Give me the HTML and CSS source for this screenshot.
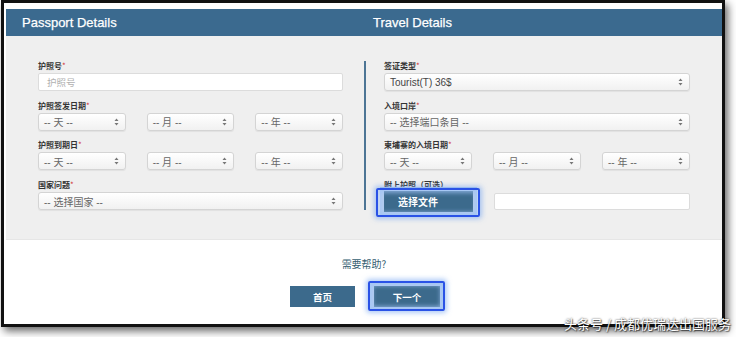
FILE: index.html
```html
<!DOCTYPE html>
<html lang="zh">
<head>
<meta charset="utf-8">
<title>Visa Form</title>
<link rel="stylesheet" href="styles.css">
</head>
<body>
<div class="frame">
  <div class="header">
    <div class="h-col h-left">Passport Details</div>
    <div class="h-col">Travel Details</div>
  </div>
  <div class="section">
    <div class="cols">
      <div class="col">
        <div class="field">
          <div class="label">护照号<span class="req">*</span></div>
          <div class="input"><span class="ph">护照号</span></div>
        </div>
        <div class="field">
          <div class="label">护照签发日期<span class="req">*</span></div>
          <div class="row3">
            <div class="select"><span>-- 天 --</span><svg class="arr" width="5" height="8" viewBox="0 0 5 8"><path d="M2.5 0.5 L4.5 3 H0.5 Z M2.5 7.5 L4.5 5 H0.5 Z" fill="#777"/></svg></div>
            <div class="select"><span>-- 月 --</span><svg class="arr" width="5" height="8" viewBox="0 0 5 8"><path d="M2.5 0.5 L4.5 3 H0.5 Z M2.5 7.5 L4.5 5 H0.5 Z" fill="#777"/></svg></div>
            <div class="select"><span>-- 年 --</span><svg class="arr" width="5" height="8" viewBox="0 0 5 8"><path d="M2.5 0.5 L4.5 3 H0.5 Z M2.5 7.5 L4.5 5 H0.5 Z" fill="#777"/></svg></div>
          </div>
        </div>
        <div class="field">
          <div class="label">护照到期日<span class="req">*</span></div>
          <div class="row3">
            <div class="select"><span>-- 天 --</span><svg class="arr" width="5" height="8" viewBox="0 0 5 8"><path d="M2.5 0.5 L4.5 3 H0.5 Z M2.5 7.5 L4.5 5 H0.5 Z" fill="#777"/></svg></div>
            <div class="select"><span>-- 月 --</span><svg class="arr" width="5" height="8" viewBox="0 0 5 8"><path d="M2.5 0.5 L4.5 3 H0.5 Z M2.5 7.5 L4.5 5 H0.5 Z" fill="#777"/></svg></div>
            <div class="select"><span>-- 年 --</span><svg class="arr" width="5" height="8" viewBox="0 0 5 8"><path d="M2.5 0.5 L4.5 3 H0.5 Z M2.5 7.5 L4.5 5 H0.5 Z" fill="#777"/></svg></div>
          </div>
        </div>
        <div class="field">
          <div class="label">国家问题<span class="req">*</span></div>
          <div class="select"><span>-- 选择国家 --</span><svg class="arr" width="5" height="8" viewBox="0 0 5 8"><path d="M2.5 0.5 L4.5 3 H0.5 Z M2.5 7.5 L4.5 5 H0.5 Z" fill="#777"/></svg></div>
        </div>
      </div>
      <div class="divider"></div>
      <div class="col">
        <div class="field">
          <div class="label">签证类型<span class="req">*</span></div>
          <div class="select"><span class="dark">Tourist(T) 36$</span><svg class="arr" width="5" height="8" viewBox="0 0 5 8"><path d="M2.5 0.5 L4.5 3 H0.5 Z M2.5 7.5 L4.5 5 H0.5 Z" fill="#777"/></svg></div>
        </div>
        <div class="field">
          <div class="label">入境口岸<span class="req">*</span></div>
          <div class="select"><span>-- 选择端口条目 --</span><svg class="arr" width="5" height="8" viewBox="0 0 5 8"><path d="M2.5 0.5 L4.5 3 H0.5 Z M2.5 7.5 L4.5 5 H0.5 Z" fill="#777"/></svg></div>
        </div>
        <div class="field">
          <div class="label">柬埔寨的入境日期<span class="req">*</span></div>
          <div class="row3">
            <div class="select"><span>-- 天 --</span><svg class="arr" width="5" height="8" viewBox="0 0 5 8"><path d="M2.5 0.5 L4.5 3 H0.5 Z M2.5 7.5 L4.5 5 H0.5 Z" fill="#777"/></svg></div>
            <div class="select"><span>-- 月 --</span><svg class="arr" width="5" height="8" viewBox="0 0 5 8"><path d="M2.5 0.5 L4.5 3 H0.5 Z M2.5 7.5 L4.5 5 H0.5 Z" fill="#777"/></svg></div>
            <div class="select"><span>-- 年 --</span><svg class="arr" width="5" height="8" viewBox="0 0 5 8"><path d="M2.5 0.5 L4.5 3 H0.5 Z M2.5 7.5 L4.5 5 H0.5 Z" fill="#777"/></svg></div>
          </div>
        </div>
        <div class="field">
          <div class="label">附上护照（可选）</div>
          <div class="file-row">
            <button class="btn file-btn">选择文件</button>
            <div class="input file-name"></div>
          </div>
        </div>
      </div>
    </div>
  </div>
  <div class="footer">
    <div class="help">需要帮助?</div>
    <div class="actions">
      <button class="btn nav-btn">首页</button>
      <button class="btn nav-btn next-btn">下一个</button>
    </div>
  </div>
</div>
<div class="watermark">头条号 / 成都优瑞达出国服务</div>
</body>
</html>
```
FILE: styles.css
```css
* { box-sizing: border-box; }
html, body {
  margin: 0;
  padding: 0;
  background: #ffffff;
  font-family: "Liberation Sans", "Noto Sans CJK SC", sans-serif;
}
body { position: relative; width: 736px; height: 337px; overflow: hidden; }

.frame {
  margin: 0 0 0 1px;
  width: 724px;
  height: 327px;
  border: 3px solid #111;
  padding: 6px 0 0 2px;
  background: #fff;
  box-shadow: 3px 4px 8px rgba(0, 0, 0, 0.6);
}

.header {
  height: 27px;
  background: #3b6a8f;
  display: grid;
  grid-template-columns: 351px 1fr;
  align-items: center;
  color: #fff;
  font-size: 13px;
  -webkit-text-stroke: 0.25px #fff;
}
.h-col { padding-left: 16px; }

.section {
  background: #efefef;
  padding: 22px 32px 22px 32px;
  border-bottom: 1px solid #e6e6e6;
}
.cols {
  display: flex;
  padding: 3px 0 7px 0;
}
.col { display: flex; flex-direction: column; gap: 9.7px; }
.col:first-child { width: 305px; }
.col:last-child { flex: 1; }
.divider {
  width: 2px;
  margin: 0 18px 0 21px;
  background: #4d7595;
}

.label {
  height: 10px;
  line-height: 10px;
  margin-bottom: 2px;
  font-size: 8px;
  font-weight: bold;
  color: #333;
  font-family: "Noto Sans CJK SC", sans-serif;
  white-space: nowrap;
}
.req { color: #d23a3a; font-weight: normal; }

.input {
  height: 18px;
  background: #fff;
  border: 1px solid #dcdcdc;
  border-radius: 2px;
  padding-left: 8px;
  display: flex;
  align-items: center;
  font-size: 9.5px;
}
.ph { color: #b0b0b0; font-family: "Noto Sans CJK SC", sans-serif; }

.row3 { display: flex; gap: 21px; }
.row3 .select { flex: 1; }

.select {
  height: 18px;
  border: 1px solid #d4d4d4;
  border-radius: 3px;
  background: linear-gradient(#ffffff, #f1f1f1);
  box-shadow: 0 1px 1px rgba(0, 0, 0, 0.06);
  display: flex;
  align-items: center;
  justify-content: space-between;
  padding: 0 6px 0 5px;
  font-size: 10px;
  color: #666;
  font-family: "Liberation Sans", "Noto Sans CJK SC", sans-serif;
  white-space: nowrap;
}
.select .dark { color: #444; }
.arr { flex: none; }

.file-row {
  height: 18px;
  display: flex;
  align-items: center;
  gap: 21px;
}

.btn {
  border: none;
  background: #3c6a8c;
  color: #fff;
  font-family: "Noto Sans CJK SC", sans-serif;
  font-size: 9.5px;
  font-weight: bold;
  padding: 0;
  margin: 0;
  position: relative;
}
.file-btn {
  width: 89px;
  height: 21px;
  margin-top: 1px;
  text-align: left;
  padding-left: 14px;
  font-size: 10px;
  box-shadow: 0 0 0 4px #b4cdef;
}
.file-btn::before {
  content: "";
  position: absolute;
  top: -3px; left: -8px; right: -7px; bottom: -5px;
  border: 2px solid #2a52e6;
  border-radius: 2px;
  box-shadow: 0 0 5px 2px rgba(110, 160, 240, 0.55), inset 0 0 4px 3px rgba(160, 195, 245, 0.7);
}
.file-name { flex: 1; height: 17px; }

.footer {
  padding: 18px 0 0 0;
  text-align: center;
}
.help {
  height: 12px;
  line-height: 12px;
  font-size: 10px;
  color: #356072;
  font-family: "Noto Sans CJK SC", sans-serif;
  margin-bottom: 16px;
}
.actions {
  display: flex;
  justify-content: center;
  gap: 19px;
  padding-left: 2px;
}
.nav-btn { width: 65px; height: 21px; }
.next-btn { width: 66px; box-shadow: 0 0 0 4px #b4cdef; }
.next-btn::before {
  content: "";
  position: absolute;
  top: -5px; left: -6px; right: -5px; bottom: -4px;
  border: 2px solid #2a52e6;
  border-radius: 2px;
  box-shadow: 0 0 5px 2px rgba(110, 160, 240, 0.55), inset 0 0 4px 3px rgba(160, 195, 245, 0.7);
}

.watermark {
  position: absolute;
  right: 5px;
  top: 316px;
  font-family: "Noto Sans CJK SC", sans-serif;
  font-size: 13px;
  line-height: 16px;
  color: #fff;
  text-shadow: 0 0 2px rgba(0, 0, 0, 0.8), 1px 1px 1px rgba(0, 0, 0, 0.5);
  white-space: nowrap;
}
```
